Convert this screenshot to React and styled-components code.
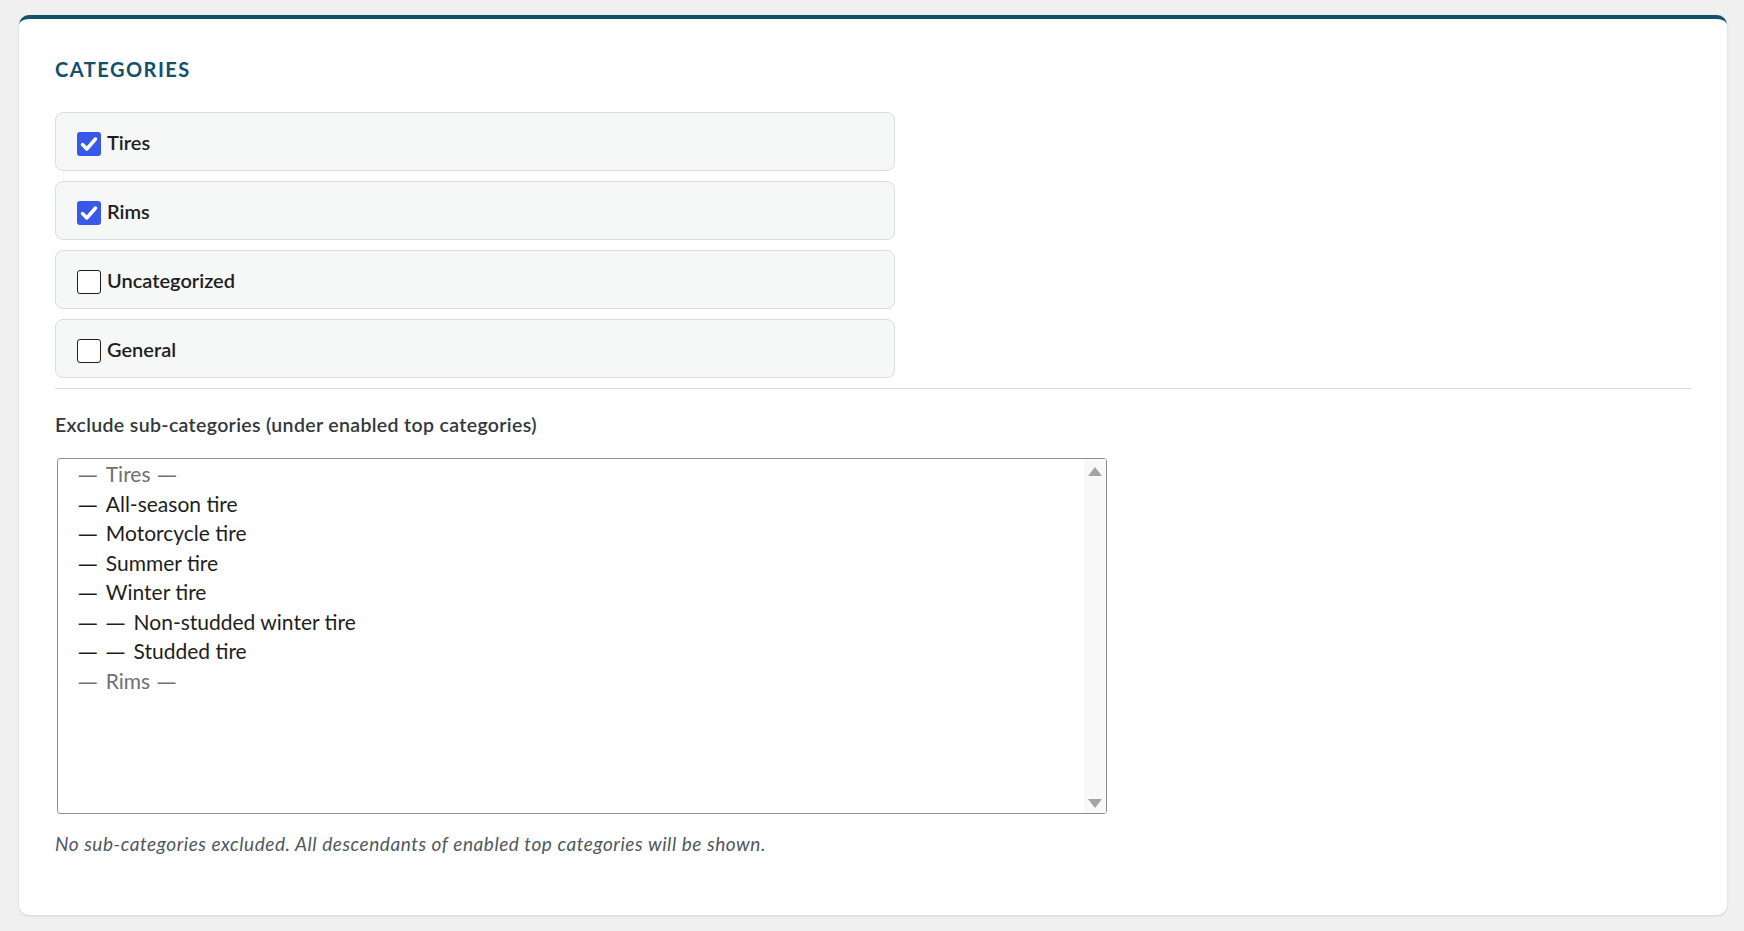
import React from 'react';
import styled, { createGlobalStyle } from 'styled-components';

const GlobalStyle = createGlobalStyle`
  html, body { margin: 0; padding: 0; background: #f0f0f1; }
  body { font-family: Lato, "Noto Sans", sans-serif; color: #1e1e1e; }
  * { box-sizing: border-box; }
`;

const Page = styled.div`
  padding: 15px 17px 16px 19px;
`;

const Card = styled.section`
  background: #fff;
  border-top: 4px solid #12506e;
  border-radius: 10px;
  box-shadow: 0 1px 3px rgba(0, 0, 0, 0.13);
  height: 900px;
  padding: 37px 36px 0 36px;
  display: flex;
  flex-direction: column;
`;

const Heading = styled.h2`
  margin: 0 0 30px;
  font-size: 20px;
  line-height: 26px;
  font-weight: 700;
  letter-spacing: 1.5px;
  text-transform: uppercase;
  color: #12506e;
`;

const RowList = styled.div`
  display: flex;
  flex-direction: column;
  gap: 10px;
  width: 840px;
`;

const Row = styled.label`
  display: flex;
  align-items: center;
  gap: 6px;
  height: 59px;
  padding-left: 21px;
  background: #f6f7f7;
  border: 1px solid #dcdcde;
  border-radius: 8px;
  font-size: 20px;
  line-height: 26px;
  font-weight: 600;
  color: #1e1e1e;
`;

const Box = styled.span`
  flex: none;
  width: 24px;
  height: 24px;
  margin-top: 5px;
  border-radius: 3px;
  display: flex;
  align-items: center;
  justify-content: center;
  background: ${p => (p.$checked ? '#3858e9' : '#fff')};
  border: ${p => (p.$checked ? 'none' : '1.5px solid #1e1e1e')};
`;

const Divider = styled.hr`
  margin: 10px 0 0;
  border: 0;
  height: 1px;
  background: #dcdcde;
`;

const FieldLabel = styled.div`
  margin-top: 24px;
  font-size: 19.5px;
  line-height: 24px;
  letter-spacing: 0.35px;
  font-weight: 600;
  color: #32373c;
`;

const ListBox = styled.div`
  margin: 21px 0 0 2px;
  width: 1050px;
  height: 356px;
  border: 1px solid #8c8f94;
  border-radius: 3px;
  display: flex;
  background: #fff;
`;

const Options = styled.div`
  flex: 1;
  padding-left: 20px;
`;

const Option = styled.div`
  height: 29.5px;
  font-size: 21px;
  line-height: 29.5px;
  white-space: pre;
  color: ${p => (p.$group ? '#707070' : '#1e1e1e')};
`;

const Dash = styled.span`
  font-family: "Noto Sans", sans-serif;
  font-size: 19.5px;
  line-height: 0;
  letter-spacing: 1.6px;
`;

const ScrollTrack = styled.div`
  width: 22px;
  background: #f8f8f8;
  display: flex;
  flex-direction: column;
  align-items: center;
  justify-content: space-between;
  padding: 8px 0 5px;
`;

const Arrow = styled.span`
  width: 0;
  height: 0;
  border-left: 7px solid transparent;
  border-right: 7px solid transparent;
  ${p => (p.$down ? 'border-top: 9px solid #a3a3a3;' : 'border-bottom: 9px solid #a3a3a3;')}
`;

const Help = styled.p`
  margin: 18px 0 0;
  font-size: 19px;
  line-height: 24px;
  letter-spacing: 0.55px;
  font-style: italic;
  color: #50575e;
`;

const Check = () => (
  <svg width="24" height="24" viewBox="0 0 24 24" fill="none">
    <path d="M5.5 12.5l4.3 4.5L18.5 7" stroke="#fff" strokeWidth="3.5" strokeLinecap="round" strokeLinejoin="round" />
  </svg>
);

const categories = [
  { name: 'Tires', checked: true },
  { name: 'Rims', checked: true },
  { name: 'Uncategorized', checked: false },
  { name: 'General', checked: false },
];

const options = [
  { text: 'Tires', depth: 1, group: true },
  { text: 'All-season tire', depth: 1 },
  { text: 'Motorcycle tire', depth: 1 },
  { text: 'Summer tire', depth: 1 },
  { text: 'Winter tire', depth: 1 },
  { text: 'Non-studded winter tire', depth: 2 },
  { text: 'Studded tire', depth: 2 },
  { text: 'Rims', depth: 1, group: true },
];

export default function App() {
  return (
    <Page>
      <GlobalStyle />
      <Card>
        <Heading>Categories</Heading>
        <RowList>
          {categories.map(c => (
            <Row key={c.name}>
              <Box $checked={c.checked}>{c.checked && <Check />}</Box>
              {c.name}
            </Row>
          ))}
        </RowList>
        <Divider />
        <FieldLabel>Exclude sub-categories (under enabled top categories)</FieldLabel>
        <ListBox>
          <Options>
            {options.map(o => (
              <Option key={o.text} $group={o.group}>
                <Dash>{'— '.repeat(o.depth)}</Dash>
                {o.text}
                {o.group && <Dash> —</Dash>}
              </Option>
            ))}
          </Options>
          <ScrollTrack>
            <Arrow />
            <Arrow $down />
          </ScrollTrack>
        </ListBox>
        <Help>No sub-categories excluded. All descendants of enabled top categories will be shown.</Help>
      </Card>
    </Page>
  );
}
